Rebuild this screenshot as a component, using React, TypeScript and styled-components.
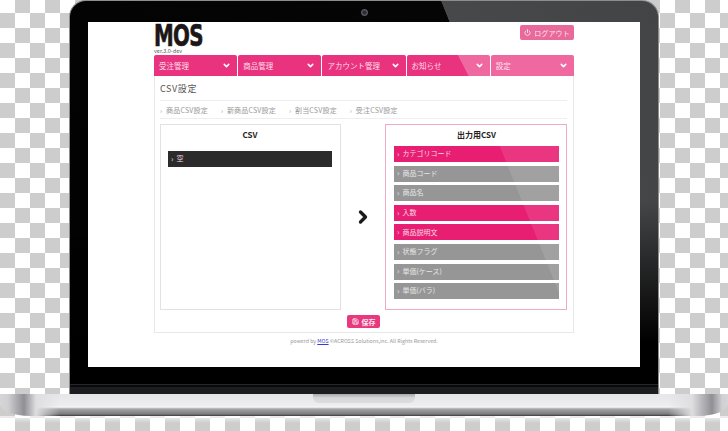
import React from "react";
import styled, { createGlobalStyle } from "styled-components";
import { ChevronDown, ChevronRight, Power, Save } from "lucide-react";

const GlobalStyle = createGlobalStyle`
  html, body {
    margin: 0;
    padding: 0;
    width: 728px;
    height: 431px;
    overflow: hidden;
    font-family: "Noto Sans CJK JP", "Noto Sans", sans-serif;
  }
`;

const Stage = styled.div`
  width: 728px;
  height: 431px;
  display: flex;
  flex-direction: column;
  overflow: hidden;
  background-color: #fff;
  background-image: conic-gradient(#cdcdcd 25%, #fff 0 50%, #cdcdcd 0 75%, #fff 0);
  background-size: 30px 30px;
  background-position: 0 -2px;
`;

const Lid = styled.div`
  box-sizing: border-box;
  width: 590px;
  height: 394px;
  flex: none;
  margin-left: 69px;
  padding: 21px 18px 0;
  border-radius: 17px 17px 0 0;
  border: 1px solid #8d8d8d;
  border-bottom: 0;
  background:
    linear-gradient(to bottom, transparent 383px, #26272a 383px, #26272a 384px, #0a0a0a 384px, #0a0a0a 386px, #1c1d21 386px),
    linear-gradient(to bottom, transparent 200px, #000 340px),
    linear-gradient(68deg, #020202 0, #050505 491px, #47484a 491.6px, #434446 100%);
  position: relative;
`;

const Camera = styled.div`
  position: absolute;
  top: 8px;
  left: 291px;
  width: 7px;
  height: 7px;
  border-radius: 50%;
  background: radial-gradient(#2a2a30 25%, #5c5c62 60%, #111 100%);
`;

const Screen = styled.div`
  box-sizing: border-box;
  height: 345px;
  background: #fff;
  padding: 0 66px;
  display: flex;
  flex-direction: column;
`;

const Header = styled.div`
  height: 33px;
  display: flex;
  justify-content: space-between;
  align-items: flex-start;
`;

const LogoBlock = styled.div`
  display: flex;
  flex-direction: column;
  padding-top: 1px;
`;

const Logo = styled.div`
  font-family: "DejaVu Sans", sans-serif;
  font-weight: 700;
  font-size: 31px;
  height: 25px;
  line-height: 25px;
  letter-spacing: -1px;
  color: #1c1616;
  -webkit-text-stroke: 0.7px #1c1616;
  transform: scaleX(0.64);
  transform-origin: left;
`;

const Version = styled.div`
  font-size: 5.5px;
  line-height: 6px;
  color: #555;
`;

const LogoutButton = styled.div`
  margin-top: 3px;
  width: 54px;
  height: 15px;
  border-radius: 2px;
  background: #e8699a;
  color: #fbe4ee;
  font-size: 7px;
  letter-spacing: 0.1px;
  display: flex;
  align-items: center;
  justify-content: center;
  gap: 3px;
`;

const Nav = styled.div`
  display: flex;
  gap: 1px;
  height: 21px;
  position: relative;

  &::after {
    content: "";
    position: absolute;
    inset: 0;
    background: linear-gradient(63deg, transparent 280px, rgba(255, 255, 255, 0.26) 280.6px);
  }
`;

const NavItem = styled.div`
  box-sizing: border-box;
  flex: 1;
  padding: 0 6px 1px 5px;
  display: flex;
  align-items: center;
  justify-content: space-between;
  background: #ea337f;
  color: #fbdfe9;
  font-size: 7.5px;
  white-space: nowrap;
  border-radius: 2px 2px 0 0;
`;

const Panel = styled.div`
  box-sizing: border-box;
  height: 257px;
  border: 1px solid #e8e8e8;
  border-top: 0;
  padding: 7px 6px 0 5px;
  display: flex;
  flex-direction: column;
`;

const Title = styled.div`
  font-size: 9px;
  line-height: 12px;
  height: 17px;
  letter-spacing: 0.6px;
  color: #555;
`;

const Crumbs = styled.div`
  display: flex;
  height: 19px;
  align-items: center;
  border-top: 1px solid #eee;
  border-bottom: 1px solid #eee;
  box-sizing: border-box;
  font-size: 7px;
  letter-spacing: 0.2px;
  color: #999;
  gap: 13px;
`;

const Crumb = styled.span`
  display: flex;
  align-items: center;
  white-space: nowrap;

  &::before {
    content: "›";
    width: 6px;
    color: #aaa;
  }
`;

const Columns = styled.div`
  display: flex;
  margin-top: 5px;
  align-items: stretch;
`;

const Box = styled.div<{ $active?: boolean }>`
  box-sizing: border-box;
  width: ${(p) => (p.$active ? "182px" : "181px")};
  height: 186px;
  border: 1px solid ${(p) => (p.$active ? "#eeaac6" : "#e2e2e2")};
  padding: ${(p) => (p.$active ? "4px 7px 0 8px" : "4px 8px 0 7px")};
  background: #fff;
`;

const BoxTitle = styled.div`
  font-size: 8px;
  font-weight: 700;
  color: #222;
  text-align: center;
  line-height: 12px;
  height: 17px;
`;

const SourceList = styled.div`
  padding-top: 5px;
`;

const Middle = styled.div`
  flex: 1;
  display: flex;
  align-items: center;
  justify-content: center;
  color: #1a1a1a;
`;

const FieldList = styled.div`
  display: flex;
  flex-direction: column;
  gap: 3.6px;
  position: relative;

  &::after {
    content: "";
    position: absolute;
    inset: 0;
    background: linear-gradient(68deg, transparent 155px, rgba(255, 255, 255, 0.1) 155.6px);
  }
`;

const Field = styled.div<{ $tone: "pink" | "gray" | "dark" }>`
  height: 16px;
  box-sizing: border-box;
  padding: 0 0 1.5px 3px;
  display: flex;
  align-items: center;
  gap: 3px;
  font-size: 7px;
  color: ${(p) => (p.$tone === "gray" ? "#e6e6e6" : "#f8d8e4")};
  background: ${(p) => (p.$tone === "pink" ? "#e81e73" : p.$tone === "gray" ? "#969696" : "#2b2b2b")};

  &::before {
    content: "›";
    font-size: 8px;
  }
`;

const SaveRow = styled.div`
  display: flex;
  justify-content: center;
  margin-top: 5px;
`;

const SaveButton = styled.div`
  width: 33px;
  height: 13px;
  border-radius: 2px;
  background: #e8397f;
  color: #fce6ef;
  font-size: 7px;
  font-weight: 700;
  display: flex;
  align-items: center;
  justify-content: center;
  gap: 3px;
`;

const Footer = styled.div`
  text-align: center;
  font-size: 5.25px;
  line-height: 8px;
  margin-top: 4px;
  color: #999;

  a {
    color: #3a3ad0;
    text-decoration: underline;
  }
`;

const Base = styled.div`
  height: 22px;
  flex: none;
  display: flex;
  justify-content: center;
  align-items: flex-start;
  border-radius: 0 0 30px 30px / 0 0 12px 12px;
  background:
    linear-gradient(to right, #d6d6d8 0, #d0d0d2 8px, #8f8f95 24px, #dedee0 36px, transparent 60px, transparent 668px, #dedee0 692px, #8f8f95 712px, #d0d0d2 722px, #d6d6d8 100%),
    linear-gradient(to bottom, #e6e6e8 0, #eeeef0 12px, #fafafa 13px, #a4a4a6 15px, #7c7c7e 20px, #3a3a3c 22px);
`;

const Notch = styled.div`
  width: 102px;
  height: 9px;
  border-radius: 0 0 6px 6px;
  background: linear-gradient(to bottom, #a9a9ab 0, #d8d8da 4px, #dcdcde 100%);
`;

const Reflection = styled.div`
  flex: 1;
  background: linear-gradient(to bottom, rgba(255, 255, 255, 0.7) 0, rgba(255, 255, 255, 0) 7px);
`;

const menu = ["受注管理", "商品管理", "アカウント管理", "お知らせ", "設定"];

const crumbs = ["商品CSV設定", "新商品CSV設定", "割当CSV設定", "受注CSV設定"];

const fields: [string, "pink" | "gray"][] = [
  ["カテゴリコード", "pink"],
  ["商品コード", "gray"],
  ["商品名", "gray"],
  ["入数", "pink"],
  ["商品説明文", "pink"],
  ["状態フラグ", "gray"],
  ["単価(ケース)", "gray"],
  ["単価(バラ)", "gray"],
];

export default function App() {
  return (
    <Stage>
      <GlobalStyle />
      <Lid>
        <Camera />
        <Screen>
          <Header>
            <LogoBlock>
              <Logo>MOS</Logo>
              <Version>ver.3.0-dev</Version>
            </LogoBlock>
            <LogoutButton>
              <Power size={7} strokeWidth={3} />
              ログアウト
            </LogoutButton>
          </Header>
          <Nav>
            {menu.map((label) => (
              <NavItem key={label}>
                {label}
                <ChevronDown size={9} strokeWidth={4} color="#fff" />
              </NavItem>
            ))}
          </Nav>
          <Panel>
            <Title>CSV設定</Title>
            <Crumbs>
              {crumbs.map((c) => (
                <Crumb key={c}>{c}</Crumb>
              ))}
            </Crumbs>
            <Columns>
              <Box>
                <BoxTitle>CSV</BoxTitle>
                <SourceList>
                  <Field $tone="dark">空</Field>
                </SourceList>
              </Box>
              <Middle>
                <ChevronRight size={20} strokeWidth={4} />
              </Middle>
              <Box $active>
                <BoxTitle>出力用CSV</BoxTitle>
                <FieldList>
                  {fields.map(([label, tone]) => (
                    <Field key={label} $tone={tone}>
                      {label}
                    </Field>
                  ))}
                </FieldList>
              </Box>
            </Columns>
            <SaveRow>
              <SaveButton>
                <Save size={7} strokeWidth={3} />
                保存
              </SaveButton>
            </SaveRow>
          </Panel>
          <Footer>
            powerd by <a>MOS</a> ©ACROSS Solutions,inc. All Rights Reserved.
          </Footer>
        </Screen>
      </Lid>
      <Base>
        <Notch />
      </Base>
      <Reflection />
    </Stage>
  );
}
